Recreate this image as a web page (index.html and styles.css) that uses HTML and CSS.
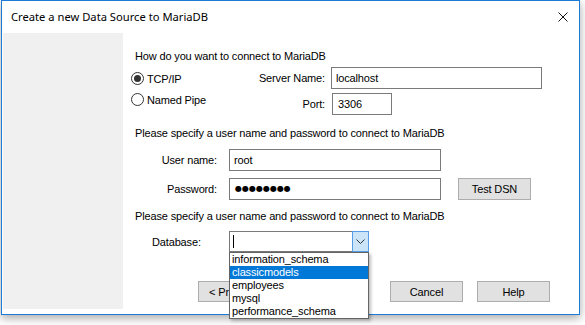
FILE: index.html
```html
<!DOCTYPE html>
<html>
<head>
<meta charset="utf-8">
<link rel="stylesheet" href="styles.css">
</head>
<body>
<div class="window">
  <div class="titlebar">
    <span class="title">Create a new Data Source to MariaDB</span>
    <svg class="close" width="10" height="10" viewBox="0 0 10 10"><path d="M0.5 0.5 L9.5 9.5 M9.5 0.5 L0.5 9.5" stroke="#111" stroke-width="1" fill="none"/></svg>
  </div>
  <div class="content">
    <div class="side"></div>
    <div class="form">
      <p class="heading h1">How do you want to connect to MariaDB</p>
      <div class="conn">
        <div class="radios">
          <div class="radio"><span class="dot checked"></span>TCP/IP</div>
          <div class="radio"><span class="dot"></span>Named Pipe</div>
        </div>
        <span class="lbl">Server Name:</span>
        <div class="input">localhost</div>
        <span class="lbl">Port:</span>
        <div class="input port">3306</div>
      </div>
      <p class="heading h2">Please specify a user name and password to connect to MariaDB</p>
      <div class="cred">
        <span class="lbl">User name:</span>
        <div class="input">root</div>
        <span></span>
        <span class="lbl">Password:</span>
        <div class="input pw">●●●●●●●●</div>
        <button class="btn test">Test DSN</button>
      </div>
      <p class="heading h3">Please specify a user name and password to connect to MariaDB</p>
      <div class="dbrow">
        <span class="dblbl">Database:</span>
        <div class="combo">
          <div class="combo-field"><span class="caret"></span></div>
          <div class="combo-btn"><svg width="9" height="5" viewBox="0 0 9 5"><path d="M0.5 0.5 L4.5 4.5 L8.5 0.5" stroke="#333" stroke-width="1" fill="none"/></svg></div>
          <ul class="combo-list">
            <li>information_schema</li>
            <li class="sel">classicmodels</li>
            <li>employees</li>
            <li>mysql</li>
            <li>performance_schema</li>
          </ul>
        </div>
      </div>
      <div class="buttons">
        <button class="btn">&lt; Previous</button>
        <button class="btn">Next &gt;</button>
        <button class="btn cancel">Cancel</button>
        <button class="btn help">Help</button>
      </div>
    </div>
  </div>
</div>
</body>
</html>
```
FILE: styles.css
```css
html, body {
  margin: 0;
  height: 325px;
  overflow: hidden;
  background: #ffffff;
}
body {
  font-family: "Liberation Sans", Arial, sans-serif;
  font-size: 11px;
  letter-spacing: -0.15px;
  color: #000;
}
.window {
  margin-left: 1px;
  width: 579px;
  height: 315px;
  box-sizing: border-box;
  border: 1px solid #1c7cd5;
  background: #fff;
  box-shadow: 0 3px 9px rgba(0, 0, 0, 0.35);
  display: flex;
  flex-direction: column;
}
.titlebar {
  height: 31px;
  flex: none;
  display: flex;
  align-items: center;
  justify-content: space-between;
  padding: 0 11px 0 9px;
}
.title {
  font-family: "Noto Sans", "Open Sans", sans-serif;
  font-size: 11.2px;
  letter-spacing: 0;
  color: #000;
}
.content {
  flex: 1;
  display: flex;
  align-items: flex-start;
  padding-left: 1px;
}
.side {
  margin-top: 1px;
  width: 120px;
  height: 276px;
  background: #f0f0f0;
  flex: none;
}
.form {
  margin-left: 8px;
  flex: 1;
}
.heading {
  margin: 0;
  line-height: 14px;
  padding-left: 4px;
}
.h1 { margin-top: 17px; }
.h2 { margin-top: 11px; }
.h3 { margin-top: 9px; }
.conn {
  margin-top: 4px;
  display: grid;
  grid-template-columns: 120px 68px 211px;
  grid-template-rows: 22px 22px;
  column-gap: 6px;
  row-gap: 4px;
}
.radios {
  grid-row: 1 / 3;
  display: flex;
  flex-direction: column;
  padding-top: 5px;
  gap: 8px;
}
.radio {
  display: flex;
  align-items: center;
  height: 13px;
  gap: 3px;
}
.dot {
  width: 13px;
  height: 13px;
  box-sizing: border-box;
  border: 1px solid #333;
  border-radius: 50%;
  display: flex;
  align-items: center;
  justify-content: center;
  background: #fff;
}
.dot.checked::after {
  content: "";
  width: 7px;
  height: 7px;
  border-radius: 50%;
  background: #333;
}
.lbl {
  text-align: right;
  align-self: center;
}
.input {
  height: 22px;
  box-sizing: border-box;
  border: 1px solid #7a7a7a;
  background: #fff;
  padding: 0 4px;
  line-height: 20px;
}
.port {
  width: 60px;
  margin-left: 1px;
  padding-left: 5px;
}
.cred {
  margin-top: 9px;
  display: grid;
  grid-template-columns: 86px 212px 78px;
  grid-template-rows: 22px 22px;
  column-gap: 12px;
  row-gap: 7px;
}
.pw {
  font-family: "DejaVu Sans", sans-serif;
  font-size: 8px;
  letter-spacing: 0;
  padding-left: 5px;
}
.btn {
  height: 22px;
  width: 73px;
  box-sizing: border-box;
  border: 1px solid #adadad;
  background: #e1e1e1;
  font-family: "Liberation Sans", Arial, sans-serif;
  font-size: 11px;
  letter-spacing: -0.15px;
  color: #000;
  padding: 0;
}
.test {
  margin-left: 5px;
}
.dbrow {
  margin-top: 8px;
  display: flex;
  align-items: center;
}
.dblbl {
  width: 98px;
  padding-left: 21px;
  box-sizing: border-box;
}
.combo {
  position: relative;
  width: 140px;
  height: 21px;
  box-sizing: border-box;
  border: 1px solid #7a7a7a;
  display: flex;
  background: #fff;
}
.combo-field {
  flex: 1;
  display: flex;
  align-items: center;
  padding-left: 3px;
}
.caret {
  width: 1px;
  height: 13px;
  background: #000;
}
.combo-btn {
  width: 17px;
  margin: -1px -1px -1px 0;
  box-sizing: border-box;
  border: 1px solid #569de5;
  background: #cce4f7;
  display: flex;
  align-items: center;
  justify-content: center;
}
.combo-list {
  position: absolute;
  z-index: 2;
  top: calc(100% + 1px);
  left: -1px;
  width: 140px;
  box-sizing: border-box;
  margin: 0;
  padding: 0;
  list-style: none;
  border: 1px solid #646464;
  background: #fff;
  box-shadow: 2px 2px 3px rgba(0, 0, 0, 0.25);
}
.combo-list li {
  height: 13px;
  line-height: 13px;
  padding-left: 2px;
}
.combo-list li.sel {
  background: #0078d7;
  color: #fff;
}
.buttons {
  margin-top: 29px;
  padding-left: 67px;
  display: flex;
  height: 21px;
}
.buttons .btn {
  height: 21px;
}
.cancel { margin-left: 46px; }
.help { margin-left: 14px; }
```
